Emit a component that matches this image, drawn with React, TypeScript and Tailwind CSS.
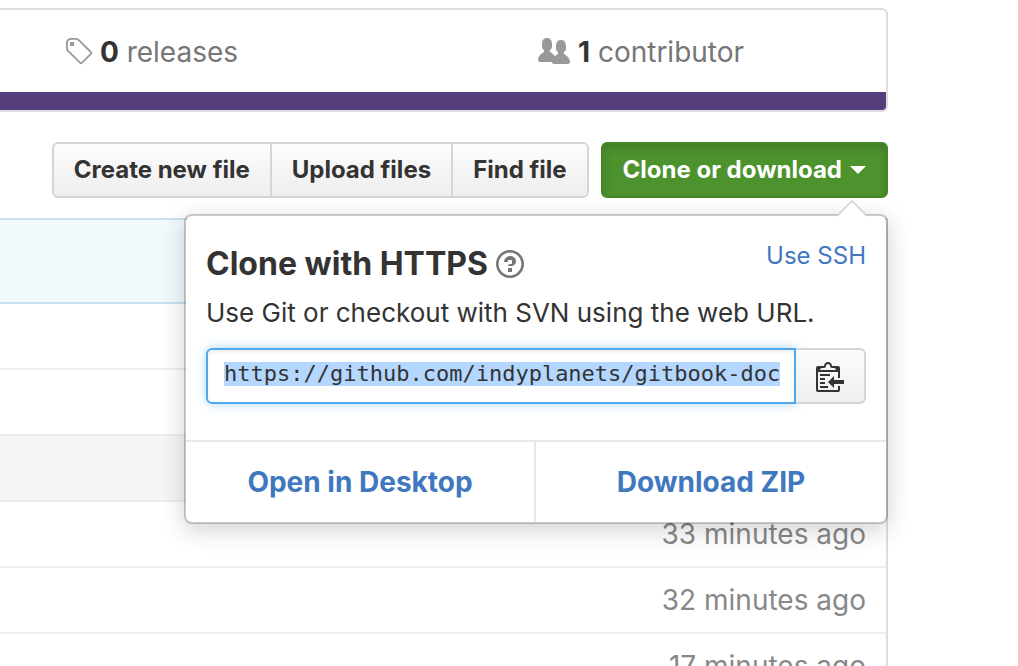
import { useEffect, useRef } from "react";
import type { ReactNode } from "react";

type IconProps = { d: string; box: string; className: string };

function Icon({ d, box, className }: IconProps) {
  return (
    <svg viewBox={box} className={className} fill="currentColor" aria-hidden="true">
      <path fillRule="evenodd" d={d} />
    </svg>
  );
}

const TAG =
  "M7.73 1.73C7.26 1.26 6.62 1 5.96 1H3.5C2.13 1 1 2.13 1 3.5v2.47c0 .66.27 1.3.73 1.77l6.06 6.06c.39.39 1.02.39 1.41 0l4.59-4.59a.996.996 0 0 0 0-1.41L7.73 1.73zM2.38 7.09c-.31-.3-.47-.7-.47-1.13V3.5c0-.88.72-1.59 1.59-1.59h2.47c.42 0 .83.16 1.13.47l6.14 6.13-4.73 4.73-6.13-6.15zM3.01 3h2v2H3V3h.01z";
const PEOPLE =
  "M16 12.999c0 .439-.45 1-1 1H7.995c-.539 0-.994-.447-.995-.999H1c-.54 0-1-.561-1-1 0-2.634 3-4 3-4s.229-.409 0-1c-.841-.621-1.058-.59-1-3 .058-2.419 1.367-3 2.5-3s2.442.58 2.5 3c.058 2.41-.159 2.379-1 3-.229.59 0 1 0 1s1.549.711 2.42 2.088C9.196 9.369 10 8.999 10 8.999s.229-.409 0-1c-.841-.62-1.058-.59-1-3 .058-2.419 1.367-3 2.5-3s2.437.581 2.495 3c.059 2.41-.158 2.38-1 3-.229.59 0 1 0 1s3.005 1.366 3.005 4";
const QUESTION =
  "M6 10h2v2H6v-2zm4-3.5C10 8.64 8 9 8 9H6c0-.55.45-1 1-1h.5c.28 0 .5-.22.5-.5v-1c0-.28-.22-.5-.5-.5h-1c-.28 0-.5.22-.5.5V7H4c0-1.5 1.5-3 3-3s3 1 3 2.5zM7 2.3c3.14 0 5.7 2.56 5.7 5.7s-2.56 5.7-5.7 5.7A5.71 5.71 0 0 1 1.3 8c0-3.14 2.56-5.7 5.7-5.7zM7 1C3.14 1 0 4.14 0 8s3.14 7 7 7 7-3.14 7-7-3.14-7-7-7z";
const CLIPPY =
  "M2 13h4v1H2v-1zm5-6H2v1h5V7zm2 3V8l-3 3 3 3v-2h5v-2H9zM4.5 9H2v1h2.5V9zM2 12h2.5v-1H2v1zm9 1h1v2c-.02.28-.11.52-.3.7-.19.18-.42.28-.7.3H1c-.55 0-1-.45-1-1V4c0-.55.45-1 1-1h3c0-1.11.89-2 2-2 1.11 0 2 .89 2 2h3c.55 0 1 .45 1 1v5h-1V6H1v9h10v-2zM2 5h8c0-.55-.45-1-1-1H8c-.55 0-1-.45-1-1s-.45-1-1-1-1 .45-1 1-.45 1-1 1H3c-.55 0-1 .45-1 1z";

function Stat({ icon, count, label }: { icon: ReactNode; count: number; label: string }) {
  return (
    <a href="#" className="flex w-[490px] shrink-0 items-center justify-center gap-2 text-[28px] text-[#767676]">
      {icon}
      <span>
        <span className="font-bold text-[#333333]">{count}</span> {label}
      </span>
    </a>
  );
}

function FileButton({ children }: { children: ReactNode }) {
  return (
    <button
      type="button"
      className="-ml-0.5 border-2 border-[#d5d5d5] bg-linear-to-b from-[#fcfcfc] to-[#eeeeee] px-5 text-2xl font-bold first:ml-0 first:rounded-l-md last:rounded-r-md"
    >
      {children}
    </button>
  );
}

const rows = ["", "", "", "33 minutes ago", "32 minutes ago", "17 minutes ago"];

function ClonePopover() {
  const url = useRef<HTMLInputElement>(null);

  useEffect(() => {
    url.current?.focus();
    url.current?.select();
  }, []);

  return (
    <section
      aria-label="Clone options"
      className="absolute top-[72px] right-0 w-[704px] rounded-lg border-2 border-black/20 bg-white bg-clip-padding shadow-[0_6px_24px_rgba(0,0,0,0.18)]"
    >
      <svg viewBox="0 0 32 18" className="absolute -top-4 right-[18px] h-[18px] w-8" aria-hidden="true">
        <path d="M1 17 16 2l15 15v1H1z" fill="#fff" />
        <path d="M1 16 16 1l15 15" fill="none" stroke="#d0d0d0" strokeWidth="1.5" />
      </svg>
      <div className="px-5 pt-5 pb-9">
        <div className="flex items-start justify-between">
          <h2 className="flex items-center gap-2 pt-1.5 text-[32px] leading-[44px] font-bold">
            Clone with HTTPS
            <a href="#" aria-label="Which remote URL should I use?" className="text-[#767676]">
              <Icon d={QUESTION} box="0 0 14 16" className="h-8 w-7" />
            </a>
          </h2>
          <a href="#" className="text-2xl leading-10 text-[#4078c0]">
            Use SSH
          </a>
        </div>
        <p className="pt-2 text-[26px] leading-[38px]">Use Git or checkout with SVN using the web URL.</p>
        <div className="mt-4 flex h-14">
          <input
            ref={url}
            readOnly
            aria-label="Clone this repository"
            value="https://github.com/indyplanets/gitbook-doc"
            className="min-w-0 flex-1 rounded-l-md border-2 border-[#51a7e8] pr-3 pb-1 pl-4 font-['DejaVu_Sans_Mono',monospace] text-[22px] leading-6 shadow-[inset_0_2px_4px_rgba(0,0,0,0.075),0_0_10px_rgba(81,167,232,0.5)] outline-none selection:bg-[#b3d7ff] selection:text-[#333333]"
          />
          <button
            type="button"
            aria-label="Copy to clipboard"
            className="flex w-[70px] items-center justify-center rounded-r-md border-2 border-l-0 border-[#d5d5d5] bg-linear-to-b from-[#fcfcfc] to-[#eeeeee]"
          >
            <Icon d={CLIPPY} box="0 0 14 16" className="h-8 w-7" />
          </button>
        </div>
      </div>
      <div className="grid h-[82px] grid-cols-2 border-t-2 border-[#e8e8e8] text-[28px] font-bold text-[#4078c0]">
        <a href="#" className="flex items-center justify-center border-r-2 border-[#e8e8e8]">
          Open in Desktop
        </a>
        <a href="#" className="flex items-center justify-center">
          Download ZIP
        </a>
      </div>
    </section>
  );
}

export default function App() {
  return (
    <main className="h-screen overflow-hidden bg-white pt-2 pr-[130px] font-['Inter',sans-serif] text-[#333333]">
      <div className="overflow-hidden rounded-r-md border-2 border-l-0 border-[#dddddd]">
        <div className="flex h-[82px] items-center justify-end pt-0.5">
          <Stat icon={<Icon d={TAG} box="0 0 14 16" className="h-8 w-7 text-[#999999]" />} count={0} label="releases" />
          <Stat icon={<Icon d={PEOPLE} box="0 0 16 16" className="size-8 text-[#999999]" />} count={1} label="contributor" />
        </div>
        <div className="h-[18px] bg-[#563d7c]" />
      </div>
      <div className="relative z-10 mt-[30px] flex h-14 justify-end gap-3">
        <div className="flex">
          <FileButton>Create new file</FileButton>
          <FileButton>Upload files</FileButton>
          <FileButton>Find file</FileButton>
        </div>
        <button
          type="button"
          className="flex items-center gap-2 rounded-md border-2 border-[#458628] bg-[#4c922d] px-5 text-2xl font-bold text-white shadow-[inset_0_4px_8px_rgba(0,0,0,0.15)]"
        >
          Clone or download
          <svg viewBox="0 0 16 8" className="h-2 w-4" fill="currentColor" aria-hidden="true">
            <path d="M0 0h16L8 8z" />
          </svg>
        </button>
        <ClonePopover />
      </div>
      <div className="mt-5 border-r-2 border-[#dddddd]">
        <div className="h-[86px] border-y-2 border-[#c8e1ef] bg-[#f2f9fc]" />
        <table className="w-full border-separate border-spacing-0">
          <tbody>
            {rows.map((age, i) => (
              <tr key={i} className="nth-3:bg-[#f5f5f5]">
                <td className="h-[66px] border-b-2 border-[#eeeeee] pr-5 text-right text-[28px] leading-10 text-[#888888]">
                  {age}
                </td>
              </tr>
            ))}
          </tbody>
        </table>
      </div>
    </main>
  );
}
